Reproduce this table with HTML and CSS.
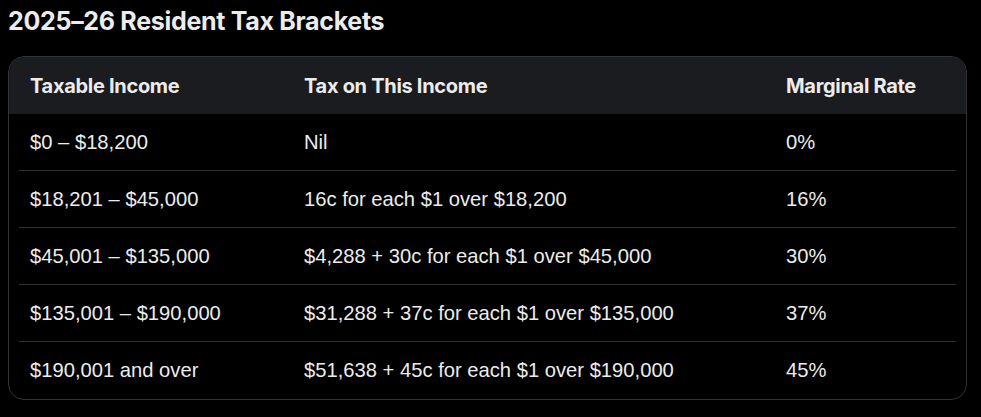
FILE: index.html
```html
<!DOCTYPE html>
<html>
<head>
<meta charset="utf-8">
<link rel="stylesheet" href="styles.css">
</head>
<body>
<h3 class="title">2025–26 Resident Tax Brackets</h3>
<div class="table">
  <div class="row head">
    <div class="c1">Taxable Income</div>
    <div class="c2">Tax on This Income</div>
    <div class="c3">Marginal Rate</div>
  </div>
  <div class="body">
    <div class="row">
      <div class="c1">$0 – $18,200</div>
      <div class="c2">Nil</div>
      <div class="c3">0%</div>
    </div>
    <div class="row">
      <div class="c1">$18,201 – $45,000</div>
      <div class="c2">16c for each $1 over $18,200</div>
      <div class="c3">16%</div>
    </div>
    <div class="row">
      <div class="c1">$45,001 – $135,000</div>
      <div class="c2">$4,288 + 30c for each $1 over $45,000</div>
      <div class="c3">30%</div>
    </div>
    <div class="row">
      <div class="c1">$135,001 – $190,000</div>
      <div class="c2">$31,288 + 37c for each $1 over $135,000</div>
      <div class="c3">37%</div>
    </div>
    <div class="row last">
      <div class="c1">$190,001 and over</div>
      <div class="c2">$51,638 + 45c for each $1 over $190,000</div>
      <div class="c3">45%</div>
    </div>
  </div>
</div>
</body>
</html>
```

FILE: styles.css
```css
html, body {
  background: #000;
}
body {
  margin: 0;
  padding: 0 14px 0 8px;
  color: #ececec;
  font-family: "Liberation Sans", Arial, sans-serif;
}
.title {
  margin: 0;
  padding-top: 6px;
  height: 56px;
  box-sizing: border-box;
  font-family: Inter, "Liberation Sans", sans-serif;
  font-size: 25px;
  font-weight: 700;
  line-height: 30px;
  color: #ececec;
  letter-spacing: -0.3px;
}
.table {
  border: 1px solid #333438;
  border-radius: 16px;
  overflow: hidden;
}
.row {
  display: grid;
  grid-template-columns: 274px 482px 1fr;
  align-items: center;
  font-size: 20.2px;
}
.row > div {
  padding-left: 11px;
}
.head {
  background: #1b1c1f;
  height: 57px;
  padding: 0 10px;
  font-family: Inter, "Liberation Sans", sans-serif;
  font-weight: 700;
  font-size: 20px;
  letter-spacing: -0.3px;
  color: #ececec;
}
.body {
  padding: 0 10px;
}
.body .row {
  height: 56px;
  border-bottom: 1px solid #303134;
}
.body .row.last {
  border-bottom: none;
  height: 57px;
}
```
